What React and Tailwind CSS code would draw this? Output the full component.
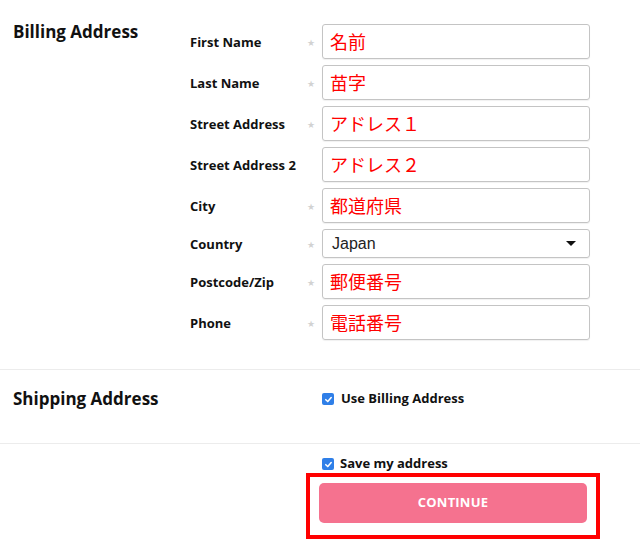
import React from "react";

const Star = () => (
  <span className="text-[9px] leading-none text-[#d2d2d2] pt-[2px]">★</span>
);

function Field({ label, value, star = true }) {
  return (
    <>
      <div className="flex items-center h-[35px] pt-[3px] text-[13px] font-bold text-[#111] font-['Open_Sans',sans-serif]">
        {label}
      </div>
      <div className="flex items-center h-[35px]">{star && <Star />}</div>
      <div className="flex items-center h-[35px] border border-[#c4c4c4] rounded-[3px] shadow-[0_1px_1px_rgba(0,0,0,0.06)] pl-[7px] text-[18px] text-[#ff0000] font-['Noto_Sans_CJK_JP',sans-serif]">
        {value}
      </div>
    </>
  );
}

const Check = () => (
  <span className="flex items-center justify-center w-[12px] h-[12px] rounded-[2px] bg-[#2f7fe8]">
    <svg width="9" height="9" viewBox="0 0 10 10">
      <path d="M2 5.2 L4.2 7.3 L8 2.8" fill="none" stroke="white" strokeWidth="1.7" strokeLinecap="round" strokeLinejoin="round" />
    </svg>
  </span>
);

export default function App() {
  return (
    <div className="w-[640px] h-[551px] bg-white overflow-hidden font-['Open_Sans',sans-serif] text-[#111]">
      <section className="flex pt-[20px] pb-[29px] border-b border-[#ececec]">
        <div className="w-[190px] pl-[13px]">
          <h2 className="text-[17px] leading-[24px] font-bold">Billing Address</h2>
        </div>
        <div className="pt-[4px] grid grid-cols-[117px_15px_268px] gap-y-[6px]">
          <Field label="First Name" value="名前" />
          <Field label="Last Name" value="苗字" />
          <Field label="Street Address" value="アドレス１" />
          <Field label="Street Address 2" value="アドレス２" star={false} />
          <Field label="City" value="都道府県" />
          <div className="flex items-center h-[29px] pt-[3px] text-[13px] font-bold">Country</div>
          <div className="flex items-center h-[29px]"><Star /></div>
          <div className="flex items-center justify-between h-[29px] border border-[#c4c4c4] rounded-[3px] shadow-[0_1px_1px_rgba(0,0,0,0.06)] pl-[9px] pr-[13px] text-[16px] text-[#222] font-['Liberation_Sans',sans-serif]">
            <span>Japan</span>
            <svg width="10" height="5" viewBox="0 0 10 5">
              <path d="M0 0 L10 0 L5 5 Z" fill="#111" />
            </svg>
          </div>
          <Field label="Postcode/Zip" value="郵便番号" />
          <Field label="Phone" value="電話番号" />
        </div>
      </section>
      <section className="flex h-[74px] pt-[17px] border-b border-[#ececec]">
        <div className="w-[322px] pl-[13px]">
          <h2 className="text-[17px] leading-[24px] font-bold">Shipping Address</h2>
        </div>
        <div className="flex items-center gap-[7px] h-[24px] text-[13px] font-bold">
          <Check />
          <span>Use Billing Address</span>
        </div>
      </section>
      <div className="pl-[322px] pt-[11px] flex items-center gap-[6px] h-[29px] text-[13px] font-bold">
        <Check />
        <span>Save my address</span>
      </div>
      <div className="ml-[306px] w-[294px] h-[66px] border-[4px] border-[#ff0000] pt-[6px] pl-[9px] pr-[9px]">
        <button className="w-full h-[40px] rounded-[5px] bg-[#f5728f] text-white text-[13px] font-bold tracking-[0.2px]">
          CONTINUE
        </button>
      </div>
    </div>
  );
}
